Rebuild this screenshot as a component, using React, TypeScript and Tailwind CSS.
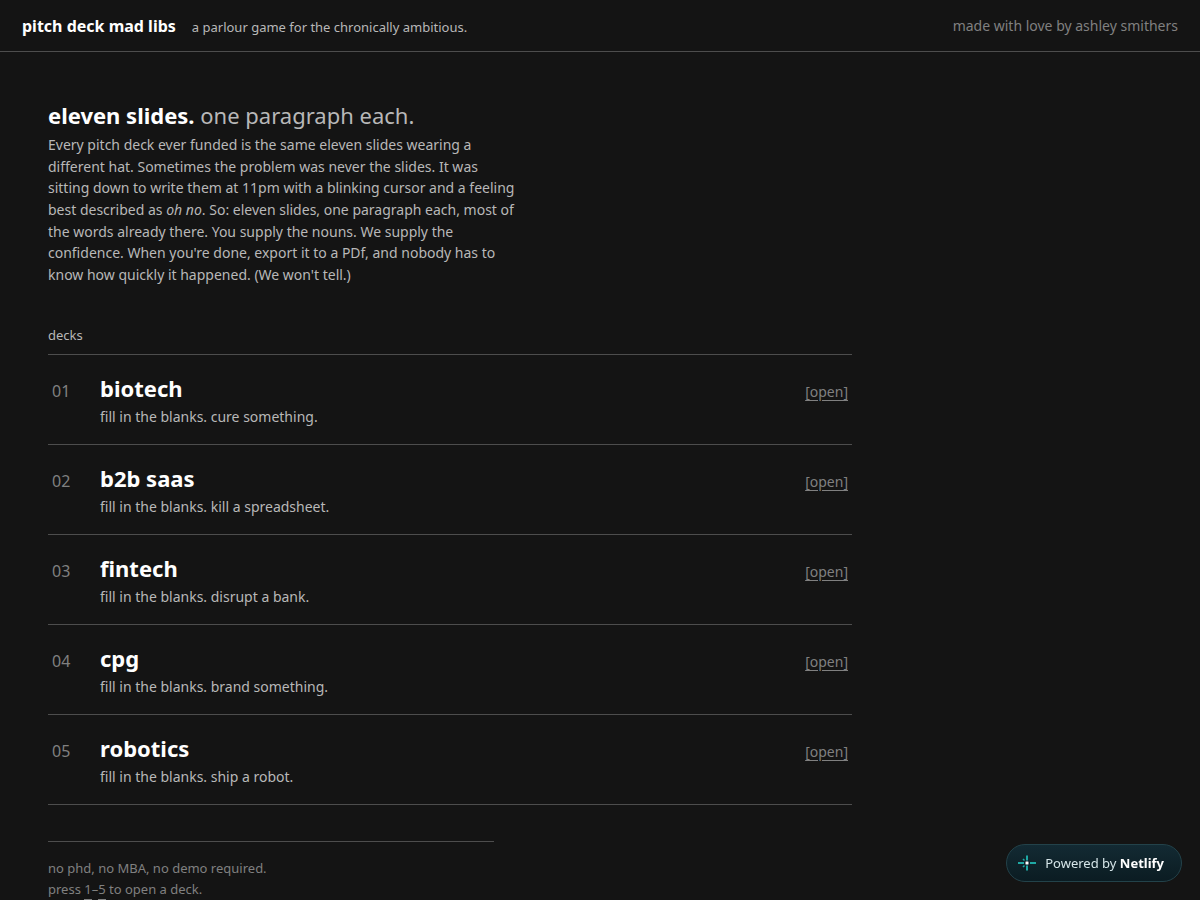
import React, { useEffect, useRef } from 'react';

interface Deck {
  slug: string;
  name: string;
  blurb: string;
}

const decks: Deck[] = [
  { slug: 'biotech', name: 'biotech', blurb: 'fill in the blanks. cure something.' },
  { slug: 'b2b-saas', name: 'b2b saas', blurb: 'fill in the blanks. kill a spreadsheet.' },
  { slug: 'fintech', name: 'fintech', blurb: 'fill in the blanks. disrupt a bank.' },
  { slug: 'cpg', name: 'cpg', blurb: 'fill in the blanks. brand something.' },
  { slug: 'robotics', name: 'robotics', blurb: 'fill in the blanks. ship a robot.' },
];

const Header = () => (
  <header className="flex items-center justify-between border-b border-[#4d4d4d] px-[22px] pt-3 pb-[11px]">
    <div className="flex items-baseline gap-4">
      <h1 className="text-base leading-7 font-bold text-white">pitch deck mad libs</h1>
      <span className="text-[13px] text-[#b8b8b8]">a parlour game for the chronically ambitious.</span>
    </div>
    <span className="text-sm text-[#808080]">made with love by ashley smithers</span>
  </header>
);

const DeckRow = ({ deck, index }: { deck: Deck; index: number }) => (
  <li className="border-b border-[#4d4d4d]">
    <a href={`#${deck.slug}`} className="flex items-baseline px-1 pt-[18px] pb-4">
      <span className="w-12 shrink-0 text-base text-[#808080]">{String(index + 1).padStart(2, '0')}</span>
      <span className="flex flex-1 flex-col gap-0.5">
        <span className="text-[22px] leading-[31px] font-bold text-white">{deck.name}</span>
        <span className="text-sm leading-[22px] text-[#b8b8b8]">{deck.blurb}</span>
      </span>
      <span className="text-sm text-[#808080] underline underline-offset-3">[open]</span>
    </a>
  </li>
);

const NetlifyMark = () => (
  <svg viewBox="0 0 20 20" className="h-5 w-5" fill="none" stroke="#1fa8a4" strokeWidth="2" aria-hidden="true">
    <path d="M10 2.5v5M10 12.5v5M1 10h6M13 10h6" />
    <path d="M6 6l1.5 1.5M6 14l1.5-1.5" strokeWidth="1.5" />
    <rect x="8.5" y="8.5" width="3" height="3" rx="0.5" fill="#fff" stroke="none" />
  </svg>
);

export default function App() {
  const list = useRef<HTMLUListElement>(null);

  useEffect(() => {
    const onKey = (e: KeyboardEvent) => {
      const n = Number(e.key);
      if (n >= 1 && n <= decks.length) {
        list.current?.querySelectorAll('a')[n - 1].click();
      }
    };
    window.addEventListener('keydown', onKey);
    return () => window.removeEventListener('keydown', onKey);
  }, []);

  return (
    <div className="min-h-screen bg-[#141414] font-['Noto_Sans',sans-serif]">
      <Header />
      <main className="max-w-[900px] px-12 pt-12">
        <h2 className="pb-1 text-[22px] leading-[30px] text-[#b8b8b8]">
          <strong className="font-bold text-white">eleven slides.</strong> one paragraph each.
        </h2>
        <p className="max-w-[472px] text-sm leading-[1.55] text-[#b8b8b8]">
          Every pitch deck ever funded is the same eleven slides wearing a different hat. Sometimes the problem was
          never the slides. It was sitting down to write them at 11pm with a blinking cursor and a feeling best
          described as <em>oh no</em>. So: eleven slides, one paragraph each, most of the words already there. You
          supply the nouns. We supply the confidence. When you're done, export it to a PDf, and nobody has to know how
          quickly it happened. (We won't tell.)
        </p>

        <h3 className="mt-10 border-b border-[#4d4d4d] pb-[10px] text-[13px] leading-[18px] text-[#b8b8b8]">decks</h3>
        <ul ref={list}>
          {decks.map((deck, i) => (
            <DeckRow key={deck.slug} deck={deck} index={i} />
          ))}
        </ul>

        <footer className="mt-9 max-w-[446px] border-t border-[#4d4d4d] pt-4 text-[13px] leading-[21px] text-[#808080]">
          <p>no phd, no MBA, no demo required.</p>
          <p>
            press <kbd className="border-b border-[#808080] pb-px font-['Noto_Sans',sans-serif]">1</kbd>–
            <kbd className="border-b border-[#808080] pb-px font-['Noto_Sans',sans-serif]">5</kbd> to open a deck.
          </p>
        </footer>
      </main>

      <a
        href="#netlify"
        className="fixed right-[18px] bottom-[18px] flex h-[38px] items-center gap-2 rounded-full border border-[#23424a] bg-linear-to-b from-[#132a33] to-[#0b1c22] pr-[17px] pl-[10px] text-[13px] text-[#d5e5e8]"
      >
        <NetlifyMark />
        <span className="leading-5">
          Powered by <strong className="font-bold text-white">Netlify</strong>
        </span>
      </a>
    </div>
  );
}
